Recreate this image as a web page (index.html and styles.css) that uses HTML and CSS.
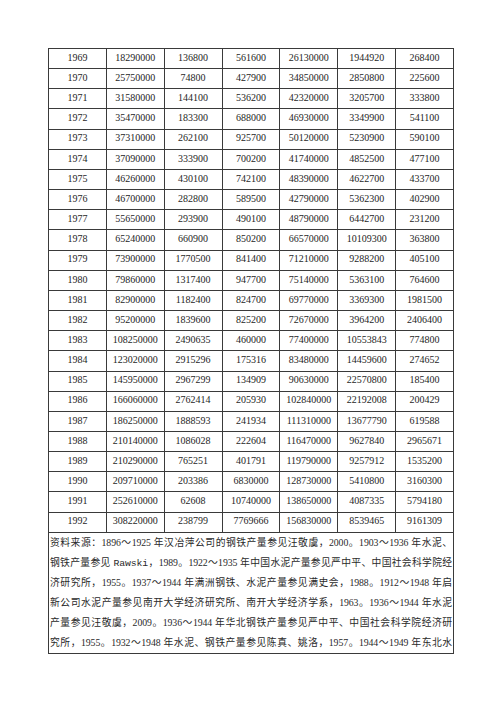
FILE: index.html
```html
<!DOCTYPE html>
<html lang="zh-CN">
<head>
<meta charset="utf-8">
<link rel="stylesheet" href="styles.css">
</head>
<body>
<div class="page">
<table class="data">
<tbody>
<tr><td>1969</td><td>18290000</td><td>136800</td><td>561600</td><td>26130000</td><td>1944920</td><td>268400</td></tr>
<tr><td>1970</td><td>25750000</td><td>74800</td><td>427900</td><td>34850000</td><td>2850800</td><td>225600</td></tr>
<tr><td>1971</td><td>31580000</td><td>144100</td><td>536200</td><td>42320000</td><td>3205700</td><td>333800</td></tr>
<tr><td>1972</td><td>35470000</td><td>183300</td><td>688000</td><td>46930000</td><td>3349900</td><td>541100</td></tr>
<tr><td>1973</td><td>37310000</td><td>262100</td><td>925700</td><td>50120000</td><td>5230900</td><td>590100</td></tr>
<tr><td>1974</td><td>37090000</td><td>333900</td><td>700200</td><td>41740000</td><td>4852500</td><td>477100</td></tr>
<tr><td>1975</td><td>46260000</td><td>430100</td><td>742100</td><td>48390000</td><td>4622700</td><td>433700</td></tr>
<tr><td>1976</td><td>46700000</td><td>282800</td><td>589500</td><td>42790000</td><td>5362300</td><td>402900</td></tr>
<tr><td>1977</td><td>55650000</td><td>293900</td><td>490100</td><td>48790000</td><td>6442700</td><td>231200</td></tr>
<tr><td>1978</td><td>65240000</td><td>660900</td><td>850200</td><td>66570000</td><td>10109300</td><td>363800</td></tr>
<tr><td>1979</td><td>73900000</td><td>1770500</td><td>841400</td><td>71210000</td><td>9288200</td><td>405100</td></tr>
<tr><td>1980</td><td>79860000</td><td>1317400</td><td>947700</td><td>75140000</td><td>5363100</td><td>764600</td></tr>
<tr><td>1981</td><td>82900000</td><td>1182400</td><td>824700</td><td>69770000</td><td>3369300</td><td>1981500</td></tr>
<tr><td>1982</td><td>95200000</td><td>1839600</td><td>825200</td><td>72670000</td><td>3964200</td><td>2406400</td></tr>
<tr><td>1983</td><td>108250000</td><td>2490635</td><td>460000</td><td>77400000</td><td>10553843</td><td>774800</td></tr>
<tr><td>1984</td><td>123020000</td><td>2915296</td><td>175316</td><td>83480000</td><td>14459600</td><td>274652</td></tr>
<tr><td>1985</td><td>145950000</td><td>2967299</td><td>134909</td><td>90630000</td><td>22570800</td><td>185400</td></tr>
<tr><td>1986</td><td>166060000</td><td>2762414</td><td>205930</td><td>102840000</td><td>22192008</td><td>200429</td></tr>
<tr><td>1987</td><td>186250000</td><td>1888593</td><td>241934</td><td>111310000</td><td>13677790</td><td>619588</td></tr>
<tr><td>1988</td><td>210140000</td><td>1086028</td><td>222604</td><td>116470000</td><td>9627840</td><td>2965671</td></tr>
<tr><td>1989</td><td>210290000</td><td>765251</td><td>401791</td><td>119790000</td><td>9257912</td><td>1535200</td></tr>
<tr><td>1990</td><td>209710000</td><td>203386</td><td>6830000</td><td>128730000</td><td>5410800</td><td>3160300</td></tr>
<tr><td>1991</td><td>252610000</td><td>62608</td><td>10740000</td><td>138650000</td><td>4087335</td><td>5794180</td></tr>
<tr><td>1992</td><td>308220000</td><td>238799</td><td>7769666</td><td>156830000</td><td>8539465</td><td>9161309</td></tr>
<tr><td class="notes" colspan="7">
<span class="line">资料来源：1896～1925 年汉冶萍公司的钢铁产量参见汪敬虞，2000。1903～1936 年水泥、</span>
<span class="line">钢铁产量参见 <span class="mono">Rawski</span>，1989。1922～1935 年中国水泥产量参见严中平、中国社会科学院经</span>
<span class="line">济研究所，1955。1937～1944 年满洲钢铁、水泥产量参见满史会，1988。1912～1948 年启</span>
<span class="line">新公司水泥产量参见南开大学经济研究所、南开大学经济学系，1963。1936～1944 年水泥</span>
<span class="line">产量参见汪敬虞，2009。1936～1944 年华北钢铁产量参见严中平、中国社会科学院经济研</span>
<span class="line">究所，1955。1932～1948 年水泥、钢铁产量参见陈真、姚洛，1957。1944～1949 年东北水</span>
</td></tr>
</tbody>
</table>
</div>
</body>
</html>
```

FILE: styles.css
```css
html, body {
  margin: 0;
  padding: 0;
  background: #ffffff;
}

.page {
  padding: 48px 0 0 48px;
}

.data {
  width: 406px;
  border-collapse: collapse;
  table-layout: fixed;
  font-family: "Liberation Serif", "Noto Sans CJK SC", serif;
  color: #1e1e1e;
}

.data td {
  border: 1px solid #3a3a3a;
  height: 17.67px;
  padding: 0 0 1.5px 0;
  text-align: center;
  vertical-align: middle;
  font-size: 10px;
  line-height: 12px;
  white-space: nowrap;
  overflow: hidden;
}

.data td.notes {
  height: auto;
  padding: 0 1px 0 1px;
  text-align: left;
  font-size: 9.8px;
  line-height: 19.8px;
  white-space: normal;
  color: #2a2a2a;
}

.line {
  display: block;
  text-align: justify;
  text-align-last: justify;
  letter-spacing: -0.1px;
}

.mono {
  font-family: "Liberation Mono", monospace;
  font-size: 9.8px;
}
```
